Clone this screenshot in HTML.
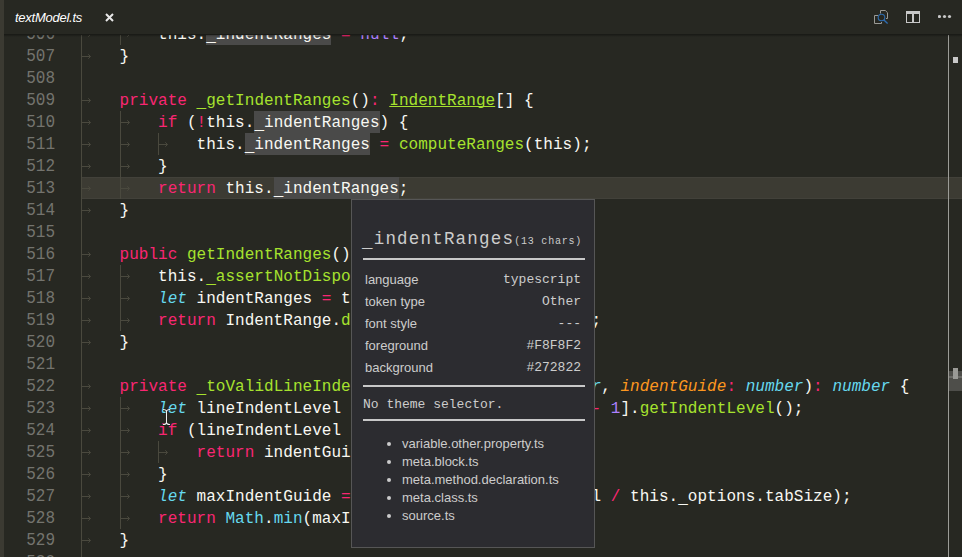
<!DOCTYPE html>
<html><head><meta charset="utf-8">
<style>
*{margin:0;padding:0;box-sizing:border-box}
html,body{width:962px;height:557px;overflow:hidden;background:#272822}
body{position:relative;font-family:"Liberation Sans",sans-serif}
#strip{position:absolute;left:0;top:0;width:4px;height:557px;background:#3b3a32}
#editor{position:absolute;left:0;top:0;width:962px;height:557px;overflow:hidden;clip-path:inset(35px 0 0 4px)}
#tabs{position:absolute;left:0;top:0;width:962px;height:35px;background:#272822}
#shadow{position:absolute;left:4px;top:34px;width:958px;height:3px;background:linear-gradient(#00000066,#00000000)}
.ln{position:absolute;left:4px;width:51px;text-align:right;font-family:"Liberation Mono",monospace;font-size:16px;color:#74746e;height:22px;line-height:22px;padding-top:1px;transform:scaleY(1.1);transform-origin:0 51%}
.cl{position:absolute;height:22px;line-height:22px;padding-top:1px;font-family:"Liberation Mono",monospace;font-size:16px;color:#f8f8f2;white-space:pre;letter-spacing:0.03px}
.g{position:absolute;width:1px;background:#4a493e}
.ar{position:absolute;width:9px;height:5px}
.k{color:#f92672}.f{color:#a6e22e}.t{color:#a6e22e;text-decoration:underline;text-underline-offset:1px;text-decoration-skip-ink:none}
.s{color:#66d9ef;font-style:italic}.c{color:#66d9ef}.p{color:#fd971f;font-style:italic}.n{color:#ae81ff}
.u{position:relative;top:2px}
.hl{background:#4a4a49;padding:3px 0 1px}
#cur{position:absolute;background:#3c3b33;border-top:1px solid #42413a;border-bottom:1px solid #42413a}
#vline{position:absolute;left:948px;top:35px;width:1px;height:522px;background:#9c9c97}
#mm1{position:absolute;left:953px;top:57px;width:5px;height:6px;background:#c8c8c8}
#slider{position:absolute;left:949px;top:371px;width:13px;height:20px;background:#4e4e4a}
#slband{position:absolute;left:949px;top:376px;width:13px;height:2px;background:#6a6a66}
#mm2{position:absolute;left:953px;top:368px;width:5px;height:11px;background:#9a9a96}
#title{position:absolute;left:15px;top:9px;font-size:13px;letter-spacing:-0.25px;font-style:italic;color:#ffffff;line-height:18px}
#close{position:absolute;left:104.6px;top:12.7px;width:9px;height:9px}
#pop{position:absolute;left:351px;top:199px;width:244px;height:349px;background:#2c2c30;border:1px solid #565656;color:#cccccc}
.mono{font-family:"Liberation Mono",monospace}
#ptok{position:absolute;left:10px;top:27px;font-size:17.5px;letter-spacing:1.2px;line-height:24px;white-space:nowrap}
#ptok small{font-size:10px;letter-spacing:0.8px}
.hr{position:absolute;left:11px;width:222px;height:2px;background:#c8c8c8}
.row{position:absolute;left:13px;width:216px;height:22px;font-size:13px;line-height:22px}
.row .v{position:absolute;right:0;top:0;font-family:"Liberation Mono",monospace}
#nosel{position:absolute;left:11px;top:196px;font-size:13px;line-height:18px;white-space:pre}
ul{position:absolute;left:50px;top:235px;font-size:13px;line-height:18px;list-style:disc}
li::marker{color:#cccccc}
</style></head><body>
<div id="editor">
<div id="cur" style="left:82px;top:177px;width:880px;height:22px"></div>
<div class="ln" style="top:23px">506</div>
<div class="ln" style="top:45px">507</div>
<div class="ln" style="top:67px">508</div>
<div class="ln" style="top:89px">509</div>
<div class="ln" style="top:111px">510</div>
<div class="ln" style="top:133px">511</div>
<div class="ln" style="top:155px">512</div>
<div class="ln" style="top:177px">513</div>
<div class="ln" style="top:199px">514</div>
<div class="ln" style="top:221px">515</div>
<div class="ln" style="top:243px">516</div>
<div class="ln" style="top:265px">517</div>
<div class="ln" style="top:287px">518</div>
<div class="ln" style="top:309px">519</div>
<div class="ln" style="top:331px">520</div>
<div class="ln" style="top:353px">521</div>
<div class="ln" style="top:375px">522</div>
<div class="ln" style="top:397px">523</div>
<div class="ln" style="top:419px">524</div>
<div class="ln" style="top:441px">525</div>
<div class="ln" style="top:463px">526</div>
<div class="ln" style="top:485px">527</div>
<div class="ln" style="top:507px">528</div>
<div class="ln" style="top:529px">529</div>
<div class="ln" style="top:551px">530</div>
<div class="g" style="left:81px;top:23px;height:550px"></div>
<div class="g" style="left:120px;top:23px;height:22px"></div>
<div class="g" style="left:120px;top:111px;height:88px"></div>
<div class="g" style="left:120px;top:265px;height:66px"></div>
<div class="g" style="left:120px;top:397px;height:132px"></div>
<div class="g" style="left:158px;top:133px;height:22px"></div>
<div class="g" style="left:158px;top:441px;height:22px"></div>
<svg class="ar" style="left:82px;top:32px" width="9" height="5" viewBox="0 0 9 5"><path d="M0 2.5H8.3M6.3 0.3L8.5 2.5L6.3 4.7" stroke="#4a493e" stroke-width="1" fill="none"/></svg>
<svg class="ar" style="left:121px;top:32px" width="9" height="5" viewBox="0 0 9 5"><path d="M0 2.5H8.3M6.3 0.3L8.5 2.5L6.3 4.7" stroke="#4a493e" stroke-width="1" fill="none"/></svg>
<svg class="ar" style="left:82px;top:54px" width="9" height="5" viewBox="0 0 9 5"><path d="M0 2.5H8.3M6.3 0.3L8.5 2.5L6.3 4.7" stroke="#4a493e" stroke-width="1" fill="none"/></svg>
<svg class="ar" style="left:82px;top:98px" width="9" height="5" viewBox="0 0 9 5"><path d="M0 2.5H8.3M6.3 0.3L8.5 2.5L6.3 4.7" stroke="#4a493e" stroke-width="1" fill="none"/></svg>
<svg class="ar" style="left:82px;top:120px" width="9" height="5" viewBox="0 0 9 5"><path d="M0 2.5H8.3M6.3 0.3L8.5 2.5L6.3 4.7" stroke="#4a493e" stroke-width="1" fill="none"/></svg>
<svg class="ar" style="left:121px;top:120px" width="9" height="5" viewBox="0 0 9 5"><path d="M0 2.5H8.3M6.3 0.3L8.5 2.5L6.3 4.7" stroke="#4a493e" stroke-width="1" fill="none"/></svg>
<svg class="ar" style="left:82px;top:142px" width="9" height="5" viewBox="0 0 9 5"><path d="M0 2.5H8.3M6.3 0.3L8.5 2.5L6.3 4.7" stroke="#4a493e" stroke-width="1" fill="none"/></svg>
<svg class="ar" style="left:121px;top:142px" width="9" height="5" viewBox="0 0 9 5"><path d="M0 2.5H8.3M6.3 0.3L8.5 2.5L6.3 4.7" stroke="#4a493e" stroke-width="1" fill="none"/></svg>
<svg class="ar" style="left:159px;top:142px" width="9" height="5" viewBox="0 0 9 5"><path d="M0 2.5H8.3M6.3 0.3L8.5 2.5L6.3 4.7" stroke="#4a493e" stroke-width="1" fill="none"/></svg>
<svg class="ar" style="left:82px;top:164px" width="9" height="5" viewBox="0 0 9 5"><path d="M0 2.5H8.3M6.3 0.3L8.5 2.5L6.3 4.7" stroke="#4a493e" stroke-width="1" fill="none"/></svg>
<svg class="ar" style="left:121px;top:164px" width="9" height="5" viewBox="0 0 9 5"><path d="M0 2.5H8.3M6.3 0.3L8.5 2.5L6.3 4.7" stroke="#4a493e" stroke-width="1" fill="none"/></svg>
<svg class="ar" style="left:82px;top:186px" width="9" height="5" viewBox="0 0 9 5"><path d="M0 2.5H8.3M6.3 0.3L8.5 2.5L6.3 4.7" stroke="#4a493e" stroke-width="1" fill="none"/></svg>
<svg class="ar" style="left:121px;top:186px" width="9" height="5" viewBox="0 0 9 5"><path d="M0 2.5H8.3M6.3 0.3L8.5 2.5L6.3 4.7" stroke="#4a493e" stroke-width="1" fill="none"/></svg>
<svg class="ar" style="left:82px;top:208px" width="9" height="5" viewBox="0 0 9 5"><path d="M0 2.5H8.3M6.3 0.3L8.5 2.5L6.3 4.7" stroke="#4a493e" stroke-width="1" fill="none"/></svg>
<svg class="ar" style="left:82px;top:252px" width="9" height="5" viewBox="0 0 9 5"><path d="M0 2.5H8.3M6.3 0.3L8.5 2.5L6.3 4.7" stroke="#4a493e" stroke-width="1" fill="none"/></svg>
<svg class="ar" style="left:82px;top:274px" width="9" height="5" viewBox="0 0 9 5"><path d="M0 2.5H8.3M6.3 0.3L8.5 2.5L6.3 4.7" stroke="#4a493e" stroke-width="1" fill="none"/></svg>
<svg class="ar" style="left:121px;top:274px" width="9" height="5" viewBox="0 0 9 5"><path d="M0 2.5H8.3M6.3 0.3L8.5 2.5L6.3 4.7" stroke="#4a493e" stroke-width="1" fill="none"/></svg>
<svg class="ar" style="left:82px;top:296px" width="9" height="5" viewBox="0 0 9 5"><path d="M0 2.5H8.3M6.3 0.3L8.5 2.5L6.3 4.7" stroke="#4a493e" stroke-width="1" fill="none"/></svg>
<svg class="ar" style="left:121px;top:296px" width="9" height="5" viewBox="0 0 9 5"><path d="M0 2.5H8.3M6.3 0.3L8.5 2.5L6.3 4.7" stroke="#4a493e" stroke-width="1" fill="none"/></svg>
<svg class="ar" style="left:82px;top:318px" width="9" height="5" viewBox="0 0 9 5"><path d="M0 2.5H8.3M6.3 0.3L8.5 2.5L6.3 4.7" stroke="#4a493e" stroke-width="1" fill="none"/></svg>
<svg class="ar" style="left:121px;top:318px" width="9" height="5" viewBox="0 0 9 5"><path d="M0 2.5H8.3M6.3 0.3L8.5 2.5L6.3 4.7" stroke="#4a493e" stroke-width="1" fill="none"/></svg>
<svg class="ar" style="left:82px;top:340px" width="9" height="5" viewBox="0 0 9 5"><path d="M0 2.5H8.3M6.3 0.3L8.5 2.5L6.3 4.7" stroke="#4a493e" stroke-width="1" fill="none"/></svg>
<svg class="ar" style="left:82px;top:384px" width="9" height="5" viewBox="0 0 9 5"><path d="M0 2.5H8.3M6.3 0.3L8.5 2.5L6.3 4.7" stroke="#4a493e" stroke-width="1" fill="none"/></svg>
<svg class="ar" style="left:82px;top:406px" width="9" height="5" viewBox="0 0 9 5"><path d="M0 2.5H8.3M6.3 0.3L8.5 2.5L6.3 4.7" stroke="#4a493e" stroke-width="1" fill="none"/></svg>
<svg class="ar" style="left:121px;top:406px" width="9" height="5" viewBox="0 0 9 5"><path d="M0 2.5H8.3M6.3 0.3L8.5 2.5L6.3 4.7" stroke="#4a493e" stroke-width="1" fill="none"/></svg>
<svg class="ar" style="left:82px;top:428px" width="9" height="5" viewBox="0 0 9 5"><path d="M0 2.5H8.3M6.3 0.3L8.5 2.5L6.3 4.7" stroke="#4a493e" stroke-width="1" fill="none"/></svg>
<svg class="ar" style="left:121px;top:428px" width="9" height="5" viewBox="0 0 9 5"><path d="M0 2.5H8.3M6.3 0.3L8.5 2.5L6.3 4.7" stroke="#4a493e" stroke-width="1" fill="none"/></svg>
<svg class="ar" style="left:82px;top:450px" width="9" height="5" viewBox="0 0 9 5"><path d="M0 2.5H8.3M6.3 0.3L8.5 2.5L6.3 4.7" stroke="#4a493e" stroke-width="1" fill="none"/></svg>
<svg class="ar" style="left:121px;top:450px" width="9" height="5" viewBox="0 0 9 5"><path d="M0 2.5H8.3M6.3 0.3L8.5 2.5L6.3 4.7" stroke="#4a493e" stroke-width="1" fill="none"/></svg>
<svg class="ar" style="left:159px;top:450px" width="9" height="5" viewBox="0 0 9 5"><path d="M0 2.5H8.3M6.3 0.3L8.5 2.5L6.3 4.7" stroke="#4a493e" stroke-width="1" fill="none"/></svg>
<svg class="ar" style="left:82px;top:472px" width="9" height="5" viewBox="0 0 9 5"><path d="M0 2.5H8.3M6.3 0.3L8.5 2.5L6.3 4.7" stroke="#4a493e" stroke-width="1" fill="none"/></svg>
<svg class="ar" style="left:121px;top:472px" width="9" height="5" viewBox="0 0 9 5"><path d="M0 2.5H8.3M6.3 0.3L8.5 2.5L6.3 4.7" stroke="#4a493e" stroke-width="1" fill="none"/></svg>
<svg class="ar" style="left:82px;top:494px" width="9" height="5" viewBox="0 0 9 5"><path d="M0 2.5H8.3M6.3 0.3L8.5 2.5L6.3 4.7" stroke="#4a493e" stroke-width="1" fill="none"/></svg>
<svg class="ar" style="left:121px;top:494px" width="9" height="5" viewBox="0 0 9 5"><path d="M0 2.5H8.3M6.3 0.3L8.5 2.5L6.3 4.7" stroke="#4a493e" stroke-width="1" fill="none"/></svg>
<svg class="ar" style="left:82px;top:516px" width="9" height="5" viewBox="0 0 9 5"><path d="M0 2.5H8.3M6.3 0.3L8.5 2.5L6.3 4.7" stroke="#4a493e" stroke-width="1" fill="none"/></svg>
<svg class="ar" style="left:121px;top:516px" width="9" height="5" viewBox="0 0 9 5"><path d="M0 2.5H8.3M6.3 0.3L8.5 2.5L6.3 4.7" stroke="#4a493e" stroke-width="1" fill="none"/></svg>
<svg class="ar" style="left:82px;top:538px" width="9" height="5" viewBox="0 0 9 5"><path d="M0 2.5H8.3M6.3 0.3L8.5 2.5L6.3 4.7" stroke="#4a493e" stroke-width="1" fill="none"/></svg>
<div class="cl" style="left:158.04px;top:23px">this.<span class="hl"><span class="u">_</span>indentRanges</span> <span class="k">=</span> <span class="n">null</span>;</div>
<div class="cl" style="left:119.52px;top:45px">}</div>
<div class="cl" style="left:119.52px;top:89px"><span class="k">private</span> <span class="f"><span class="u">_</span>getIndentRanges</span>()<span class="k">:</span> <span class="t">IndentRange</span>[] {</div>
<div class="cl" style="left:158.04px;top:111px"><span class="k">if</span> (<span class="k">!</span>this.<span class="hl"><span class="u">_</span>indentRanges</span>) {</div>
<div class="cl" style="left:196.56px;top:133px">this.<span class="hl"><span class="u">_</span>indentRanges</span> <span class="k">=</span> <span class="f">computeRanges</span>(this);</div>
<div class="cl" style="left:158.04px;top:155px">}</div>
<div class="cl" style="left:158.04px;top:177px"><span class="k">return</span> this.<span class="hl"><span class="u">_</span>indentRanges</span>;</div>
<div class="cl" style="left:119.52px;top:199px">}</div>
<div class="cl" style="left:119.52px;top:243px"><span class="k">public</span> <span class="f">getIndentRanges</span>()<span class="k">:</span> <span class="t">IndentRange</span>[] {</div>
<div class="cl" style="left:158.04px;top:265px">this.<span class="f"><span class="u">_</span>assertNotDisposed</span>();</div>
<div class="cl" style="left:158.04px;top:287px"><span class="s">let</span> indentRanges <span class="k">=</span> this.<span class="f"><span class="u">_</span>getIndentRanges</span>();</div>
<div class="cl" style="left:158.04px;top:309px"><span class="k">return</span> IndentRange.<span class="f">deepCloneArr</span>(indentRanges);</div>
<div class="cl" style="left:119.52px;top:331px">}</div>
<div class="cl" style="left:119.52px;top:375px"><span class="k">private</span> <span class="f"><span class="u">_</span>toValidLineIndentGuide</span>(<span class="p">lineNumber</span><span class="k">:</span> <span class="s">number</span>, <span class="p">indentGuide</span><span class="k">:</span> <span class="s">number</span>)<span class="k">:</span> <span class="s">number</span> {</div>
<div class="cl" style="left:158.04px;top:397px"><span class="s">let</span> lineIndentLevel <span class="k">=</span> this.<span class="u">_</span>lines[lineNumber <span class="k">-</span> <span class="n">1</span>].<span class="f">getIndentLevel</span>();</div>
<div class="cl" style="left:158.04px;top:419px"><span class="k">if</span> (lineIndentLevel <span class="k">===</span> <span class="k">-</span><span class="n">1</span>) {</div>
<div class="cl" style="left:196.56px;top:441px"><span class="k">return</span> indentGuide;</div>
<div class="cl" style="left:158.04px;top:463px">}</div>
<div class="cl" style="left:158.04px;top:485px"><span class="s">let</span> maxIndentGuide <span class="k">=</span> <span class="c">Math</span>.<span class="c">ceil</span>(lineIndentLevel <span class="k">/</span> this.<span class="u">_</span>options.tabSize);</div>
<div class="cl" style="left:158.04px;top:507px"><span class="k">return</span> <span class="c">Math</span>.<span class="c">min</span>(maxIndentGuide, indentGuide);</div>
<div class="cl" style="left:119.52px;top:529px">}</div>
</div>
<div id="vline"></div>
<div id="mm1"></div>
<div id="slider"></div>
<div id="slband"></div>
<div id="mm2"></div>
<div id="tabs">
 <div id="title">textModel.ts</div>
 <svg id="close" viewBox="0 0 9 9"><path d="M1 1L8 8M8 1L1 8" stroke="#e8e8e8" stroke-width="2"/></svg>
 <svg style="position:absolute;left:870px;top:6px" width="22" height="22" viewBox="0 0 22 22">
  <path d="M10.5 7.5V4.5H15.3L17.5 6.7V12.5H16" stroke="#9a9a96" fill="none"/>
  <path d="M8 9.5H4.5V17.5H11.5V16" stroke="#9a9a96" fill="none"/>
  <circle cx="11.5" cy="11.5" r="3.3" stroke="#2f6db0" stroke-width="1.1" fill="none"/>
  <path d="M13.9 13.9L17.6 17.6" stroke="#2f6db0" stroke-width="1.4"/>
 </svg>
 <svg style="position:absolute;left:906px;top:11px" width="14" height="12" viewBox="0 0 14 12">
  <path fill-rule="evenodd" d="M0 0H14V12H0Z M1 3H6V11H1Z M8 3H13V11H8Z" fill="#c8c8c8"/>
 </svg>
 <svg style="position:absolute;left:938px;top:14px" width="14" height="5" viewBox="0 0 14 5">
  <circle cx="1.5" cy="2.5" r="1.6" fill="#c8c8c8"/><circle cx="6.5" cy="2.5" r="1.6" fill="#c8c8c8"/><circle cx="11.5" cy="2.5" r="1.6" fill="#c8c8c8"/>
 </svg>
</div>
<div id="shadow"></div>
<div id="strip"></div>
<div id="pop">
 <div id="ptok" class="mono"><span style="position:relative;top:3px">_</span>indentRanges<small>(13 chars)</small></div>
 <div class="hr" style="top:58px"></div>
 <div class="row" style="top:69px">language<span class="v">typescript</span></div>
 <div class="row" style="top:91px">token type<span class="v">Other</span></div>
 <div class="row" style="top:113px">font style<span class="v">---</span></div>
 <div class="row" style="top:135px">foreground<span class="v">#F8F8F2</span></div>
 <div class="row" style="top:157px">background<span class="v">#272822</span></div>
 <div class="hr" style="top:185px"></div>
 <div id="nosel" class="mono">No theme selector.</div>
 <div class="hr" style="top:219px"></div>
 <ul><li>variable.other.property.ts</li><li>meta.block.ts</li><li>meta.method.declaration.ts</li><li>meta.class.ts</li><li>source.ts</li></ul>
</div>
<svg style="position:absolute;left:160px;top:406px" width="13" height="22" viewBox="0 0 13 22">
 <path d="M3 3.5Q6.5 3.5 6.5 5.5V16.5Q6.5 18.5 3 18.5M10 3.5Q6.5 3.5 6.5 5.5M6.5 16.5Q6.5 18.5 10 18.5" stroke="#000000" stroke-width="2.6" fill="none" opacity="0.35"/>
 <path d="M3 3.5Q6.5 3.5 6.5 5.5V16.5Q6.5 18.5 3 18.5M10 3.5Q6.5 3.5 6.5 5.5M6.5 16.5Q6.5 18.5 10 18.5" stroke="#f0f0f0" stroke-width="1.1" fill="none"/>
</svg>
</body></html>
